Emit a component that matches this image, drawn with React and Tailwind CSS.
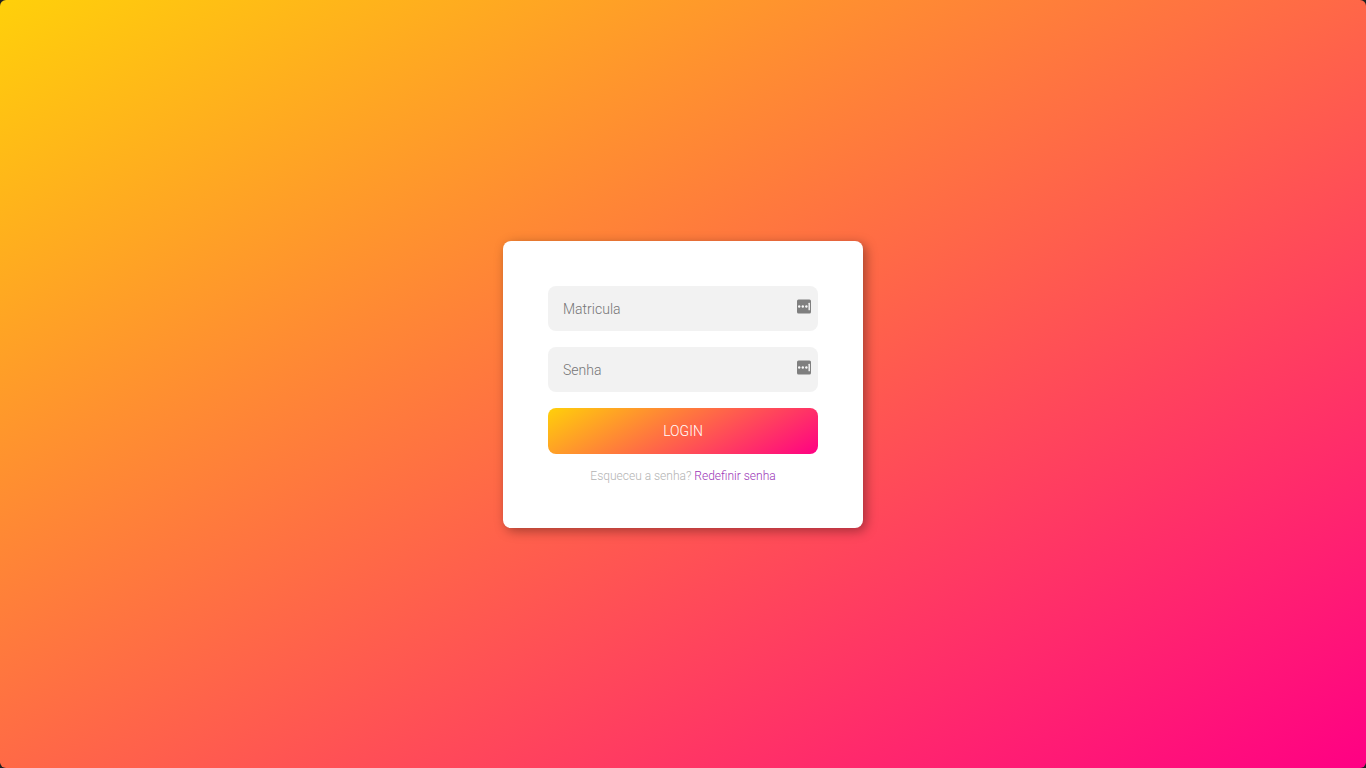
function PasswordManagerIcon() {
  return (
    <svg
      className="pointer-events-none absolute right-[7px] top-[13px] h-[15px] w-[14px]"
      viewBox="0 0 14 15"
      aria-hidden="true"
    >
      <rect x="0" y="0.5" width="14" height="14" rx="1.5" fill="#7f7f7f" />
      <circle cx="2.2" cy="7.5" r="1.2" fill="#fafafa" />
      <circle cx="5.8" cy="7.5" r="1.2" fill="#fafafa" />
      <circle cx="9.4" cy="7.5" r="1.2" fill="#fafafa" />
      <rect x="11.5" y="3.8" width="1.4" height="7.4" rx="0.5" fill="#fafafa" />
    </svg>
  );
}

function Field({ id, label, type }) {
  return (
    <div className="relative mb-4">
      <input
        id={id}
        name={id}
        type={type}
        aria-label={label}
        placeholder={label}
        className="block h-[45px] w-full rounded-lg bg-[#f2f2f2] px-[15px] pt-[2px] text-sm font-light text-[#333333] outline-none placeholder:text-[#757575]"
      />
      <PasswordManagerIcon />
    </div>
  );
}

export default function App() {
  return (
    <div className="bg-[#202020] font-['Roboto',sans-serif] font-light">
      <main className="flex min-h-screen items-center justify-center rounded-md bg-[linear-gradient(150deg,#ffd00a,#ff0084)]">
        <form
          className="w-full max-w-[360px] rounded-lg bg-white p-[45px] text-center shadow-[3px_3px_12px_rgba(0,0,0,0.36)]"
          onSubmit={(event) => event.preventDefault()}
        >
          <Field id="matricula" label="Matricula" type="text" />
          <Field id="senha" label="Senha" type="password" />
          <button
            type="submit"
            className="block h-[46px] w-full cursor-pointer rounded-lg bg-[linear-gradient(150deg,#ffd00a,#ff0084)] text-sm font-light uppercase text-white"
          >
            Login
          </button>
          <p className="mt-[15px] text-xs leading-[14px] text-[#b3b3b3]">
            Esqueceu a senha?{" "}
            <a href="#redefinir" className="text-[#9b36b7]">
              Redefinir senha
            </a>
          </p>
        </form>
      </main>
    </div>
  );
}
